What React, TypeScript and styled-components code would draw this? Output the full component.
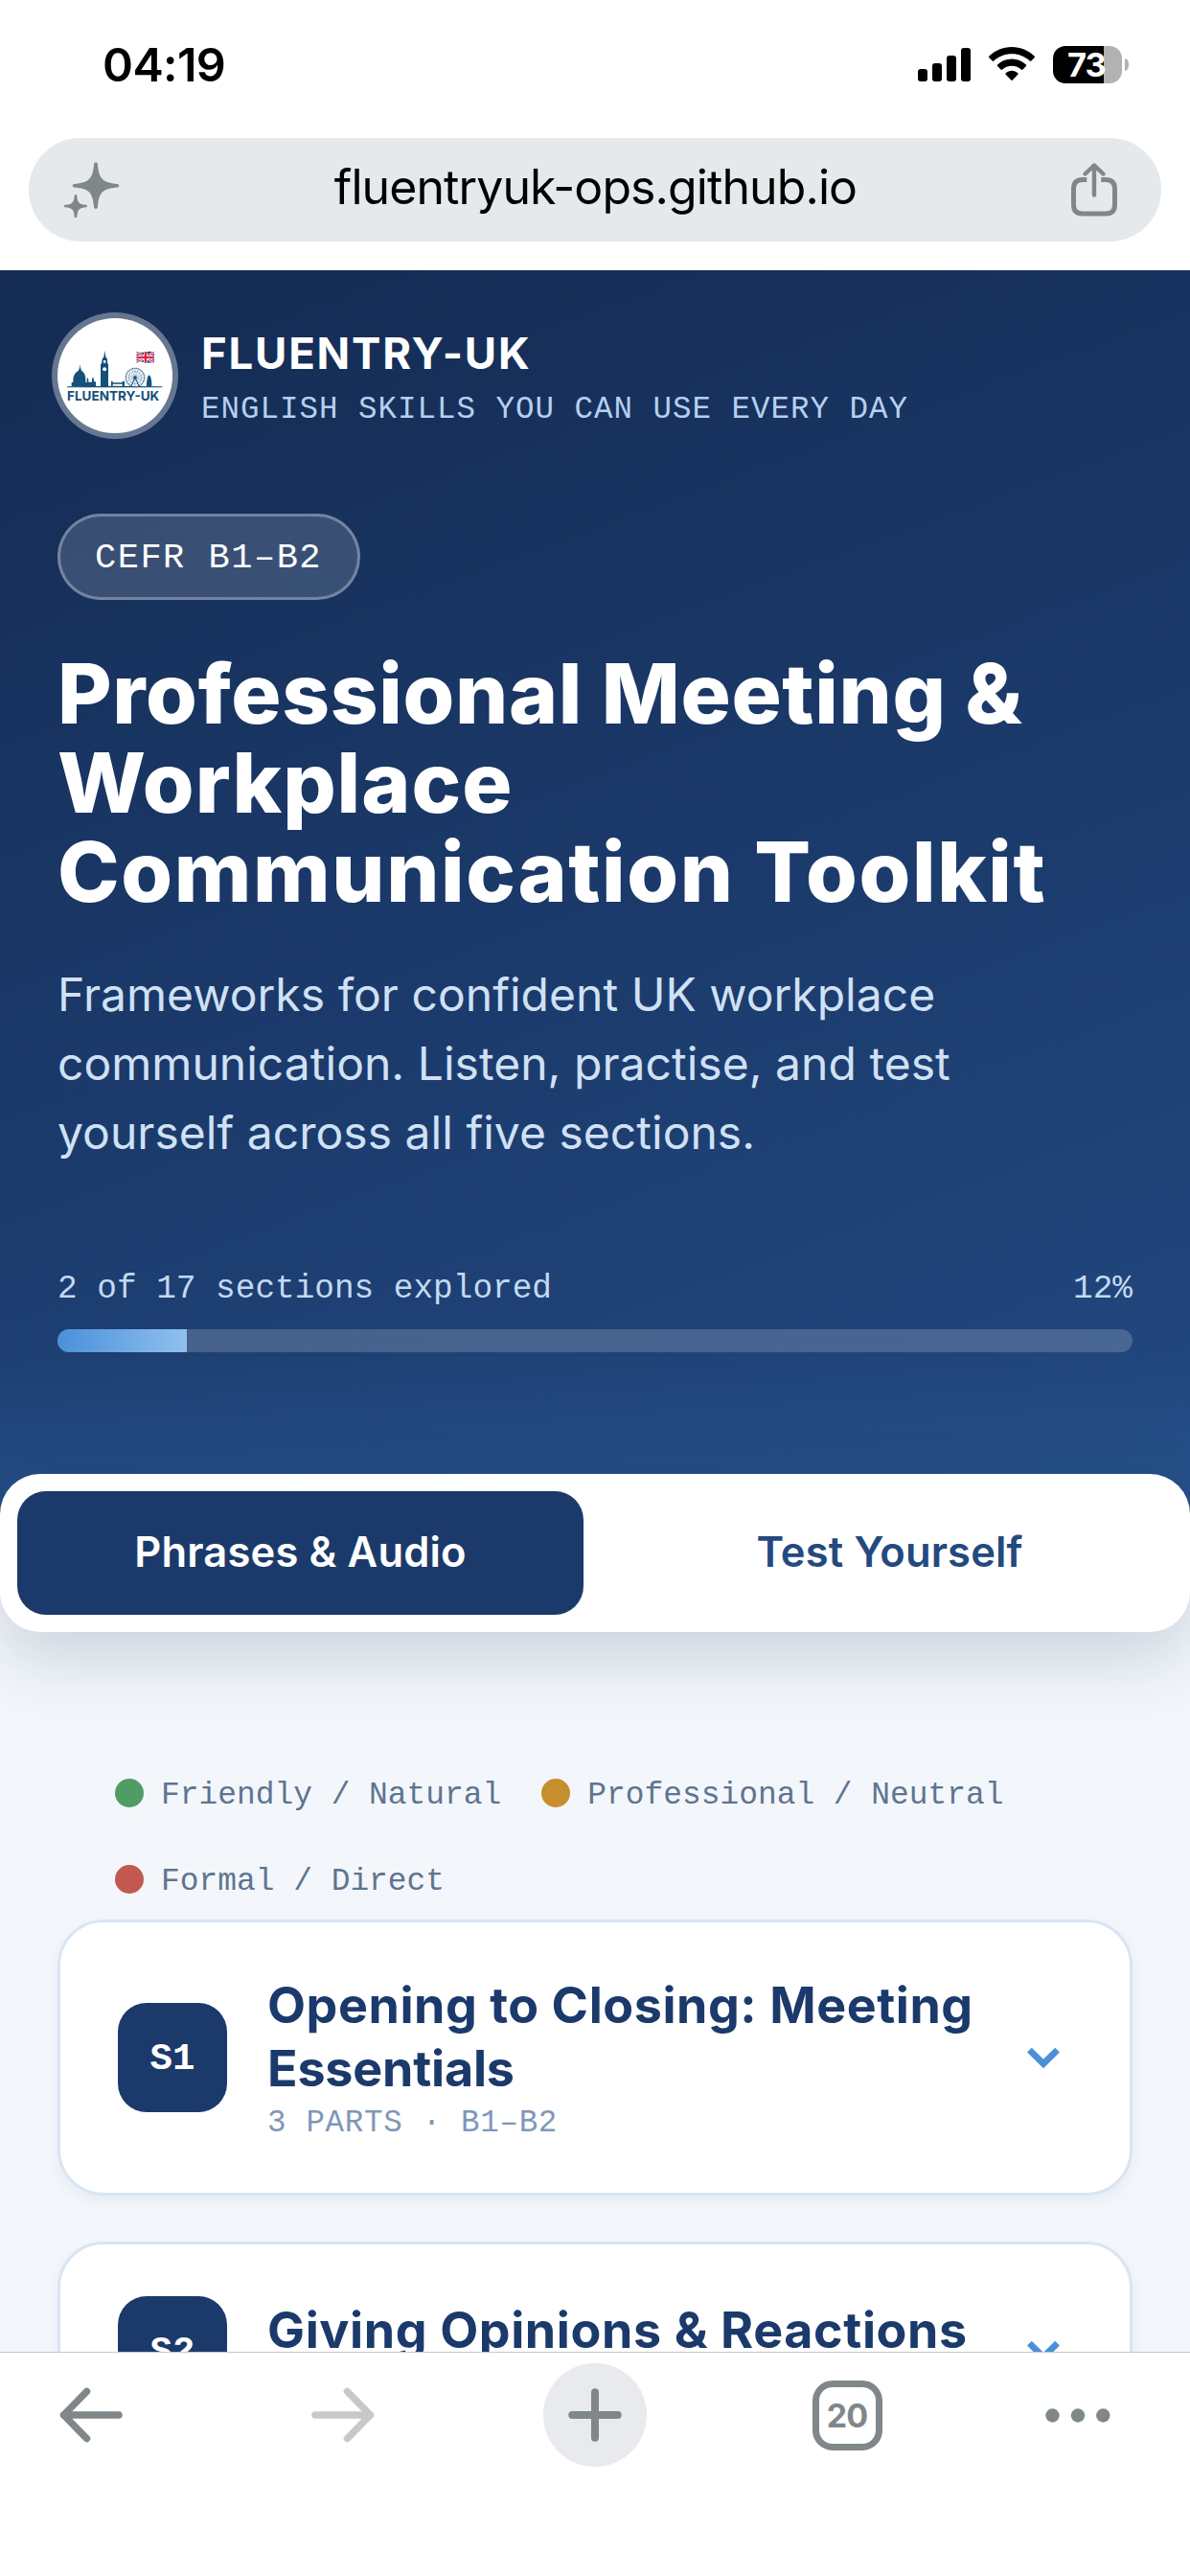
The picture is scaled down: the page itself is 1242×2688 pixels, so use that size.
import React from 'react';
import styled, { createGlobalStyle } from 'styled-components';

const SANS = "Inter, 'Liberation Sans', sans-serif";
const MONO = "'Liberation Mono', monospace";
const NAVY = '#1b3a6b';
const CHROME_GREY = '#80878a';

const GlobalStyle = createGlobalStyle`
  *, *::before, *::after { box-sizing: border-box; }
  body { margin: 0; background: #fff; font-family: ${SANS}; }
  h1, h2, p { margin: 0; }
  button { border: 0; background: none; padding: 0; font: inherit; }
`;

const Screen = styled.div`
  width: 1242px;
  height: 2688px;
  display: flex;
  flex-direction: column;
  overflow: hidden;
  background: #fff;
`;

/* ---------- Phone status bar ---------- */

const StatusBar = styled.header`
  height: 144px;
  flex: none;
  display: flex;
  align-items: flex-start;
  justify-content: space-between;
  padding: 38px 71px 0 107px;
`;

const Clock = styled.time`
  padding-top: 1px;
  font-size: 48.5px;
  font-weight: 600;
  line-height: 58px;
  letter-spacing: -0.6px;
  color: #000;
`;

const StatusIcons = styled.div`
  display: flex;
  align-items: flex-start;
  gap: 19px;
  padding-top: 10px;
`;

const Battery = styled.div`
  position: relative;
  width: 72px;
  height: 39px;
  display: flex;
  align-items: center;
  justify-content: center;
  border-radius: 13px;
  background: linear-gradient(90deg, #000 53px, #b2b2b2 53px);
  color: #fff;
  font-size: 34.5px;
  font-weight: 700;
  letter-spacing: -1px;
  padding-right: 2px;

  &::after {
    content: '';
    position: absolute;
    left: 75px;
    top: 13px;
    width: 4px;
    height: 13px;
    border-radius: 0 4px 4px 0 / 0 6px 6px 0;
    background: #b2b2b2;
  }
`;

/* ---------- Browser address bar ---------- */

const AddressRow = styled.div`
  flex: none;
  height: 138px;
  padding: 0 30px;
`;

const AddressBar = styled.div`
  height: 108px;
  border-radius: 54px;
  background: #e5e9ec;
  display: flex;
  align-items: center;
  justify-content: space-between;
  padding: 0 44px 0 35px;
`;

const Host = styled.span`
  font-size: 50px;
  line-height: 60px;
  letter-spacing: -0.92px;
  color: #000;
  padding-bottom: 6px;
`;

/* ---------- Page ---------- */

const Page = styled.main`
  flex: 1;
  min-height: 0;
  overflow: hidden;
  background: #f3f7fc;
`;

const Hero = styled.section`
  height: 1340px;
  padding: 50px 60px 0;
  background:
    linear-gradient(180deg, rgba(41, 86, 144, 0) 1130px, rgba(41, 86, 144, 0.55) 1270px),
    linear-gradient(160deg, #142b52 0%, #1b3a6b 50%, #234a83 100%);
`;

const Brand = styled.div`
  display: flex;
  align-items: center;
  gap: 30px;
  height: 120px;
`;

const LogoDisc = styled.div`
  width: 120px;
  height: 120px;
  flex: none;
  border-radius: 50%;
  background: #fff;
  box-shadow: 0 0 0 6px rgba(255, 255, 255, 0.35);
  overflow: hidden;
`;

const BrandText = styled.div`
  display: flex;
  flex-direction: column;
  gap: 12px;
  padding-top: 5px;
`;

const BrandName = styled.div`
  font-size: 45.5px;
  font-weight: 700;
  line-height: 54px;
  letter-spacing: 1.8px;
  color: #fff;
`;

const Tagline = styled.div`
  font-family: ${MONO};
  font-size: 32.5px;
  line-height: 40px;
  letter-spacing: 1px;
  color: #b5d0ee;
`;

const LevelPill = styled.span`
  display: flex;
  align-items: center;
  width: fit-content;
  height: 90px;
  margin-top: 84px;
  padding: 2px 37px 0 36px;
  border: 3px solid rgba(255, 255, 255, 0.3);
  border-radius: 45px;
  background: rgba(255, 255, 255, 0.15);
  font-family: ${MONO};
  font-size: 37px;
  letter-spacing: 1.5px;
  color: #fff;
`;

const Title = styled.h1`
  margin-top: 52px;
  font-size: 87px;
  font-weight: 800;
  line-height: 92.9px;
  color: #fff;
  white-space: nowrap;
`;

const Line = styled.span<{ $track: number }>`
  display: block;
  letter-spacing: ${(p) => p.$track}px;
`;

const Lead = styled.p`
  margin-top: 45px;
  font-size: 48px;
  line-height: 71.9px;
  color: #d0e1f4;
  white-space: nowrap;
`;

const ProgressLabels = styled.div`
  display: flex;
  justify-content: space-between;
  margin-top: 108px;
  font-family: ${MONO};
  font-size: 34.4px;
  line-height: 40px;
  color: #c3d9f2;
`;

const Track = styled.div`
  height: 24px;
  margin-top: 22px;
  border-radius: 12px;
  overflow: hidden;
  background: rgba(255, 255, 255, 0.18);
`;

const Fill = styled.div`
  height: 100%;
  background: linear-gradient(90deg, #4a90d9, #90c0ee);
`;

const TabBar = styled.nav`
  position: relative;
  height: 165px;
  margin-top: -84px;
  padding: 18px;
  display: flex;
  gap: 24px;
  border-radius: 42px;
  background: #fff;
  box-shadow: 0 24px 72px rgba(15, 40, 70, 0.19);
`;

const Tab = styled.button<{ $active?: boolean }>`
  flex: 1;
  padding-bottom: 4px;
  border-radius: 30px;
  background: ${(p) => (p.$active ? NAVY : 'transparent')};
  color: ${(p) => (p.$active ? '#fff' : '#24497f')};
  font-family: ${SANS};
  font-size: 43.5px;
  font-weight: 600;
  letter-spacing: 0.15px;
`;

const Legend = styled.div`
  display: flex;
  flex-wrap: wrap;
  gap: 40px 42px;
  margin-top: 143px;
  padding: 0 120px;
`;

const LegendItem = styled.span`
  display: flex;
  align-items: center;
  gap: 18px;
  height: 50px;
  font-family: ${MONO};
  font-size: 32.9px;
  color: #5f7490;
`;

const Dot = styled.i<{ $color: string }>`
  width: 30px;
  height: 30px;
  border-radius: 50%;
  background: ${(p) => p.$color};
`;

const LegendLabel = styled.span`
  padding-top: 4px;
`;

const Cards = styled.div`
  display: flex;
  flex-direction: column;
  gap: 48px;
  margin-top: 17px;
  padding: 0 60px;
`;

const Card = styled.article`
  display: flex;
  align-items: center;
  gap: 42px;
  padding: 54px 72px 54px 60px;
  border: 3px solid #d9e5f3;
  border-radius: 48px;
  background: #fff;
  box-shadow: 0 6px 15px rgba(20, 50, 90, 0.06);
`;

const CardCode = styled.span`
  width: 114px;
  height: 114px;
  flex: none;
  display: flex;
  align-items: center;
  justify-content: center;
  border-radius: 30px;
  background: ${NAVY};
  color: #fff;
  font-family: ${MONO};
  font-size: 39px;
  font-weight: 700;
  padding-top: 3px;
`;

const CardBody = styled.div`
  flex: 1;
  min-width: 0;
`;

const CardTitle = styled.h2`
  font-size: 52px;
  font-weight: 700;
  line-height: 66.3px;
  color: ${NAVY};
  white-space: nowrap;
`;

const CardMeta = styled.p`
  padding-top: 5px;
  font-family: ${MONO};
  font-size: 32.5px;
  line-height: 36.4px;
  letter-spacing: 0.7px;
  color: #7f97b9;
`;

/* ---------- Browser toolbar ---------- */

const Toolbar = styled.footer`
  flex: none;
  height: 234px;
  padding: 10px 25px 0;
  border-top: 1px solid #c5c7c9;
  background: #fff;
  display: flex;
  gap: 123px;
  align-items: flex-start;
`;

const ToolButton = styled.button`
  width: 140px;
  height: 110px;
  flex: none;
  display: flex;
  align-items: center;
  justify-content: center;

  &:last-child {
    margin-left: -22px;
  }
`;

const NewTab = styled.span`
  width: 108px;
  height: 108px;
  border-radius: 50%;
  background: #e8eaed;
  display: flex;
  align-items: center;
  justify-content: center;
`;

const TabCount = styled.span`
  width: 73px;
  height: 73px;
  border: 7px solid ${CHROME_GREY};
  border-radius: 21px;
  display: flex;
  align-items: center;
  justify-content: center;
  font-size: 34px;
  font-weight: 700;
  letter-spacing: -0.8px;
  color: ${CHROME_GREY};
  padding-top: 1px;
`;

/* ---------- Icons ---------- */

const Signal = () => (
  <svg width="55" height="39" viewBox="0 0 55 39">
    <rect x="0" y="24" width="10" height="13" rx="3" />
    <rect x="15" y="18" width="10" height="19" rx="3" />
    <rect x="30" y="10" width="10" height="27" rx="3" />
    <rect x="45" y="2" width="10" height="35" rx="3" />
  </svg>
);

const Wifi = () => (
  <svg width="48" height="39" viewBox="0 0 48 39">
    <path d="M24 1C14.800 1 6.500 4.700.400 10.600c-.500.500-.500 1.100 0 1.600l3.300 3.300c.500.500 1.100.500 1.600 0C10.200 11 16.700 8.300 24 8.300s13.800 2.700 18.700 7.200c.500.500 1.100.500 1.600 0l3.300-3.300c.500-.500.500-1.100 0-1.600C41.500 4.700 33.200 1 24 1z" />
    <path d="M24 13.500c-5.800 0-11 2.300-14.900 6-.500.500-.500 1.100 0 1.600l3.400 3.400c.500.500 1.100.500 1.600 0 2.600-2.400 6-3.800 9.900-3.800s7.300 1.400 9.900 3.800c.500.500 1.100.500 1.600 0l3.400-3.400c.500-.500.500-1.100 0-1.600-3.900-3.700-9.100-6-14.900-6z" />
    <path d="M24 25.800c-2.400 0-4.600.9-6.300 2.400-.500.500-.500 1.100 0 1.600l5.500 5.800c.5.500 1.100.5 1.600 0l5.500-5.800c.5-.5.5-1.100 0-1.600-1.700-1.500-3.900-2.400-6.300-2.400z" />
  </svg>
);

const Sparkles = () => (
  <svg width="62" height="62" viewBox="65 166 62 62" fill={CHROME_GREY}>
    <path d="M98.100 170.200Q98.300 168.200 100 168.200T101.900 170.200C103.200 185.500 107 189.600 122.500 190.900Q124.300 191.100 124.300 192.700T122.500 194.500C107 195.800 103.200 199.900 101.900 215.200Q101.700 217 100 217T98.100 215.200C96.800 199.900 93 195.800 77.500 194.500Q75.700 194.300 75.700 192.700T77.500 190.900C93 189.600 96.800 185.500 98.100 170.200Z" />
    <path d="M77.700 203.200Q77.900 202 79 202T80.300 203.200C80.900 210.500 82.700 212.300 90 212.800Q91 213 91 214T90 215.200C82.700 215.800 80.900 217.500 80.300 225Q80.100 226.200 79 226.200T77.700 225C77.100 217.500 75.300 215.800 68 215.200Q66.700 215 66.700 214T68 212.800C75.300 212.300 77.100 210.500 77.700 203.200Z" />
  </svg>
);

const Share = () => (
  <svg
    width="52"
    height="60"
    viewBox="0 0 52 60"
    fill="none"
    stroke={CHROME_GREY}
    strokeWidth="5"
  >
    <path d="M18.300 19.500H14Q4.500 19.500 4.500 29V45.500Q4.500 55 14 55H38Q47.500 55 47.500 45.500V29Q47.500 19.500 38 19.500H33.300" />
    <path d="M26 35.500V4.500M16.500 13.500L26 4.500L35.500 13.500" strokeWidth="4.400" strokeLinecap="round" strokeLinejoin="round" />
  </svg>
);

const Chevron = () => (
  <svg width="36" height="24" viewBox="0 -1 36 24" fill="none" stroke="#4a90d9" strokeWidth="6.800">
    <path d="M3.400 3.100L18 17.500L32.600 3.100" />
  </svg>
);

const Arrow = ({ color, flip }: { color: string; flip?: boolean }) => (
  <svg width="66" height="58" viewBox="0 0 66 58" fill="none" stroke={color} strokeWidth="7.500" strokeLinecap="round" strokeLinejoin="round">
    <path
      d="M28.500 4.500L4.500 29L28.500 53.500M4.500 29H62"
      transform={flip ? 'matrix(-1 0 0 1 66 0)' : undefined}
    />
  </svg>
);

const Plus = () => (
  <svg width="56" height="56" viewBox="0 0 56 56" stroke={CHROME_GREY} strokeWidth="8" strokeLinecap="round">
    <path d="M28 4.300V51.700M4.300 28H51.700" />
  </svg>
);

const More = () => (
  <svg width="68" height="15" viewBox="0 0 68 15" fill={CHROME_GREY}>
    <circle cx="7.500" cy="7.500" r="7.200" />
    <circle cx="34" cy="7.500" r="7.200" />
    <circle cx="60.300" cy="7.500" r="7.200" />
  </svg>
);

const spokes = Array.from({ length: 16 }, (_, i) => (i * Math.PI) / 8);

const Skyline = () => (
  <svg width="120" height="120" viewBox="60 65 360 360" fill="#14507a">
    <path d="M90 279Q240 276 388 279V282H90Z" />
    <path d="M104 279V266H109V256Q111 236 126 229L129 220L130 210L132 220L135 229Q148 236 148 256V266H152V257L154 250L157 258V265H168V257L171 249L174 257V264H180V279Z" />
    <path d="M195 279V208H198L200 193L205 186L208 167L211 186L216 193L217 208H219V279Z" />
    <circle cx="207.500" cy="225" r="6" fill="#fff" />
    <path d="M204 197H211V205H204Z" fill="#fff" />
    <path d="M228 262H233V267H263V262H270V279H263V271H233V279H228Z" />
    <g fill="none" stroke="#5d86a5">
      <circle cx="303" cy="251" r="29" strokeWidth="4" strokeDasharray="4 1.500" stroke="#3f7197" />
      <circle cx="303" cy="251" r="20" strokeWidth="1.500" />
      {spokes.map((a) => (
        <path key={a} d={`M303 251L${303 + 28 * Math.cos(a)} ${251 + 28 * Math.sin(a)}`} strokeWidth="1.600" />
      ))}
      <path d="M303 251L290 279M303 251L316 279" stroke="#14507a" strokeWidth="3" />
    </g>
    <circle cx="303" cy="251" r="5" />
    <path d="M339 279Q338 250 347 243Q356 250 355 279Z" />
    <g>
      <path d="M308 171Q322 174 335 171T363 171V203Q349 206 335 203T308 203Z" fill="#2b3f83" />
      <path d="M308 171L363 204M363 171L308 204" stroke="#fff" strokeWidth="8" />
      <path d="M308 171L363 204M363 171L308 204" stroke="#e0334b" strokeWidth="3.500" />
      <path d="M335.500 171V204M308 187.500H363" stroke="#fff" strokeWidth="11" />
      <path d="M335.500 170V205M308 187.500H363" stroke="#e0263f" strokeWidth="7" />
    </g>
    <text x="90" y="324" fontFamily={SANS} fontSize="41" fontWeight="700" textLength="289" lengthAdjust="spacingAndGlyphs">
      FLUENTRY-UK
    </text>
  </svg>
);

/* ---------- Data ---------- */

interface TextLine {
  text: string;
  track: number;
}

const explored = 12;

const titleLines: TextLine[] = [
  { text: 'Professional Meeting &', track: 0.65 },
  { text: 'Workplace', track: 1 },
  { text: 'Communication Toolkit', track: 1.6 },
];

const leadLines = [
  'Frameworks for confident UK workplace',
  'communication. Listen, practise, and test',
  'yourself across all five sections.',
];

const tones = [
  { label: 'Friendly / Natural', color: '#4f9c64' },
  { label: 'Professional / Neutral', color: '#c78e2d' },
  { label: 'Formal / Direct', color: '#c2584f' },
];

const sections = [
  {
    code: 'S1',
    lines: [
      { text: 'Opening to Closing: Meeting', track: 0.55 },
      { text: 'Essentials', track: -0.2 },
    ],
    meta: '3 PARTS · B1–B2',
  },
  {
    code: 'S2',
    lines: [{ text: 'Giving Opinions & Reactions', track: 0.6 }],
    meta: '3 PARTS · B1–B2',
  },
];

const Lines = ({ lines }: { lines: TextLine[] }) => (
  <>
    {lines.map((l) => (
      <Line key={l.text} $track={l.track}>
        {l.text}
      </Line>
    ))}
  </>
);

export default function App() {
  return (
    <>
      <GlobalStyle />
      <Screen>
        <StatusBar>
          <Clock>04:19</Clock>
          <StatusIcons>
            <Signal />
            <Wifi />
            <Battery>73</Battery>
          </StatusIcons>
        </StatusBar>

        <AddressRow>
          <AddressBar>
            <Sparkles />
            <Host>fluentryuk-ops.github.io</Host>
            <Share />
          </AddressBar>
        </AddressRow>

        <Page>
          <Hero>
            <Brand>
              <LogoDisc>
                <Skyline />
              </LogoDisc>
              <BrandText>
                <BrandName>FLUENTRY-UK</BrandName>
                <Tagline>ENGLISH SKILLS YOU CAN USE EVERY DAY</Tagline>
              </BrandText>
            </Brand>
            <LevelPill>CEFR B1–B2</LevelPill>
            <Title>
              <Lines lines={titleLines} />
            </Title>
            <Lead>
              {leadLines.map((text) => (
                <Line key={text} $track={0.03}>
                  {text}
                </Line>
              ))}
            </Lead>
            <ProgressLabels>
              <span>2 of 17 sections explored</span>
              <span>{explored}%</span>
            </ProgressLabels>
            <Track>
              <Fill style={{ width: `${explored}%` }} />
            </Track>
          </Hero>

          <TabBar>
            <Tab $active>Phrases &amp; Audio</Tab>
            <Tab>Test Yourself</Tab>
          </TabBar>

          <Legend>
            {tones.map((t) => (
              <LegendItem key={t.label}>
                <Dot $color={t.color} />
                <LegendLabel>{t.label}</LegendLabel>
              </LegendItem>
            ))}
          </Legend>

          <Cards>
            {sections.map((s) => (
              <Card key={s.code}>
                <CardCode>{s.code}</CardCode>
                <CardBody>
                  <CardTitle>
                    <Lines lines={s.lines} />
                  </CardTitle>
                  <CardMeta>{s.meta}</CardMeta>
                </CardBody>
                <Chevron />
              </Card>
            ))}
          </Cards>
        </Page>

        <Toolbar>
          <ToolButton aria-label="Back">
            <Arrow color={CHROME_GREY} />
          </ToolButton>
          <ToolButton aria-label="Forward">
            <Arrow color="#c8c8c8" flip />
          </ToolButton>
          <ToolButton aria-label="New tab">
            <NewTab>
              <Plus />
            </NewTab>
          </ToolButton>
          <ToolButton aria-label="Tabs">
            <TabCount>20</TabCount>
          </ToolButton>
          <ToolButton aria-label="More">
            <More />
          </ToolButton>
        </Toolbar>
      </Screen>
    </>
  );
}
